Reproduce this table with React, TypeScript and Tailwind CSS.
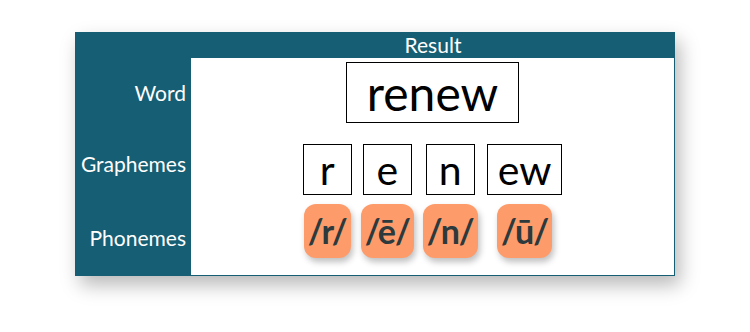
import React from "react";

const font = { fontFamily: "Lato, 'Noto Sans', sans-serif" };

const cols = [
  { g: "r", p: "/r/" },
  { g: "e", p: "/ē/" },
  { g: "n", p: "/n/" },
  { g: "ew", p: "/ū/" },
];

export default function App() {
  return (
    <div className="w-[750px] h-[332px] bg-white pt-[32px] pl-[75px]" style={font}>
      <div className="w-[600px] bg-[#165e73] shadow-[5px_9px_18px_rgba(0,0,0,0.28)] flex flex-col">
        <div className="flex h-[26px] items-center">
          <div className="w-[116px]" />
          <div className="flex-1 text-center text-white text-[21px] leading-[26px]">Result</div>
        </div>
        <div className="flex">
          <div className="w-[116px] flex flex-col text-white text-[21px] leading-[24px]">
            <div className="h-[70px] flex items-center justify-end pr-[5px]">Word</div>
            <div className="h-[72px] flex items-center justify-end pr-[5px]">Graphemes</div>
            <div className="h-[76px] flex items-center justify-end pr-[5px]">Phonemes</div>
          </div>
          <div className="flex-1 bg-white mr-px mb-px flex flex-col items-center pt-[4px] pb-[17px]">
            <div className="h-[61px] w-[173px] border border-black flex items-center justify-center text-[48px] leading-none text-black">
              renew
            </div>
            <div className="flex gap-[9px] mt-[21px]">
              {cols.map((c) => (
                <div key={c.g} className="flex flex-col items-center gap-[9px]">
                  <div className="h-[51px] min-w-[49px] px-[10px] border border-black flex items-center justify-center text-[41px] leading-none text-black">
                    {c.g}
                  </div>
                  <div className="h-[54px] px-[4px] rounded-[12px] bg-[#fd9c6a] flex items-center justify-center text-[34px] tracking-[-1px] font-bold leading-none text-[#2c393d] shadow-[2px_4px_6px_rgba(0,0,0,0.25)]">
                    {c.p}
                  </div>
                </div>
              ))}
            </div>
          </div>
        </div>
      </div>
    </div>
  );
}
